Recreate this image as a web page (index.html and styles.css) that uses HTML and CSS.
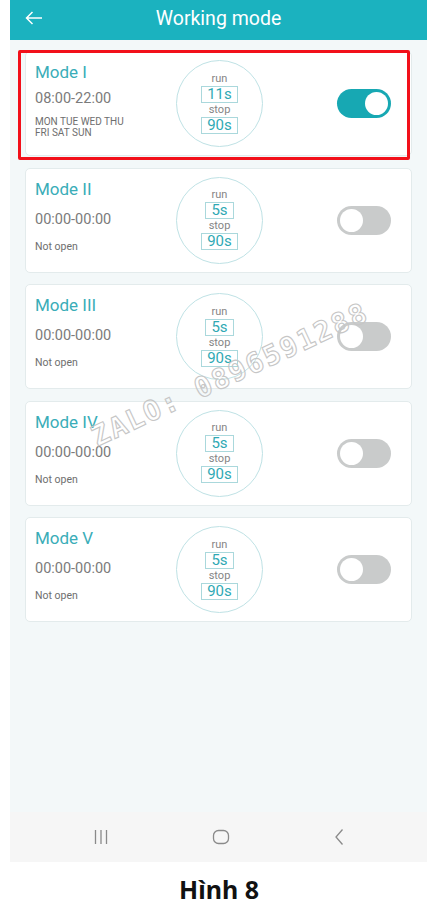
FILE: index.html
```html
<!DOCTYPE html>
<html>
<head>
<meta charset="utf-8">
<link rel="stylesheet" href="styles.css">
</head>
<body>
<div class="phone">
  <header class="header">
    <svg class="back" width="18" height="14" viewBox="0 0 18 14"><path d="M17 7H1.5M7.5 1L1.5 7l6 6" fill="none" stroke="#fff" stroke-width="1.5"/></svg>
    <div class="title">Working mode</div>
  </header>
  <main class="content">
    <div class="card first">
      <div class="info">
        <div class="name">Mode I</div>
        <div class="time">08:00-22:00</div>
        <div class="days">MON TUE WED THU<br>FRI SAT SUN</div>
      </div>
      <div class="circle"><span class="lbl">run</span><span class="val">11s</span><span class="lbl">stop</span><span class="val">90s</span></div>
      <div class="toggle on"><span class="knob"></span></div>
    </div>
    <div class="card">
      <div class="info">
        <div class="name">Mode II</div>
        <div class="time">00:00-00:00</div>
        <div class="status">Not open</div>
      </div>
      <div class="circle"><span class="lbl">run</span><span class="val">5s</span><span class="lbl">stop</span><span class="val">90s</span></div>
      <div class="toggle"><span class="knob"></span></div>
    </div>
    <div class="card">
      <div class="info">
        <div class="name">Mode III</div>
        <div class="time">00:00-00:00</div>
        <div class="status">Not open</div>
      </div>
      <div class="circle"><span class="lbl">run</span><span class="val">5s</span><span class="lbl">stop</span><span class="val">90s</span></div>
      <div class="toggle"><span class="knob"></span></div>
    </div>
    <div class="card">
      <div class="info">
        <div class="name">Mode IV</div>
        <div class="time">00:00-00:00</div>
        <div class="status">Not open</div>
      </div>
      <div class="circle"><span class="lbl">run</span><span class="val">5s</span><span class="lbl">stop</span><span class="val">90s</span></div>
      <div class="toggle"><span class="knob"></span></div>
    </div>
    <div class="card">
      <div class="info">
        <div class="name">Mode V</div>
        <div class="time">00:00-00:00</div>
        <div class="status">Not open</div>
      </div>
      <div class="circle"><span class="lbl">run</span><span class="val">5s</span><span class="lbl">stop</span><span class="val">90s</span></div>
      <div class="toggle"><span class="knob"></span></div>
    </div>
  </main>
  <nav class="navbar">
    <svg width="16" height="16" viewBox="0 0 16 16"><path d="M2.5 1v14M8 1v14M13.5 1v14" stroke="#8a8a8a" stroke-width="1.3"/></svg>
    <svg width="18" height="16" viewBox="0 0 18 16"><rect x="1.5" y="1.5" width="15" height="13" rx="5" fill="none" stroke="#8a8a8a" stroke-width="1.3"/></svg>
    <svg width="12" height="18" viewBox="0 0 12 18"><path d="M9.5 1.5L3 9l6.5 7.5" fill="none" stroke="#8a8a8a" stroke-width="1.3"/></svg>
  </nav>
  <div class="highlight"></div>
  <div class="watermark">ZALO: 0896591288</div>
</div>
<div class="caption">Hình 8</div>
</body>
</html>
```

FILE: styles.css
```css
* { box-sizing: border-box; }
body {
  margin: 0;
  background: #fff;
  font-family: Roboto, "Noto Sans", sans-serif;
}
.phone {
  position: relative;
  width: 417px;
  margin-left: 10px;
}
.header {
  height: 40px;
  background: #1bb2bf;
  display: flex;
  align-items: center;
  justify-content: center;
  position: relative;
}
.back {
  position: absolute;
  left: 15px;
  top: 11px;
}
.title {
  color: #fff;
  font-size: 19.5px;
  margin-top: -3px;
}
.content {
  background: #f3f8f9;
  height: 772px;
  padding: 11px 15px 0 15px;
  display: flex;
  flex-direction: column;
  gap: 11.5px;
}
.card {
  height: 105px;
  background: #fff;
  border: 1px solid #e3ebec;
  border-radius: 5px;
  display: flex;
  align-items: center;
}
.info {
  width: 150px;
  align-self: stretch;
  padding: 10px 0 0 9px;
  display: flex;
  flex-direction: column;
}
.name {
  color: #3aadb8;
  font-size: 17px;
  line-height: 20px;
}
.time {
  color: #7b7b7b;
  font-size: 14.5px;
  line-height: 18px;
  margin-top: 12px;
}
.first .time { margin-top: 8px; }
.status {
  color: #6e6e6e;
  font-size: 10.5px;
  line-height: 14px;
  margin-top: 11px;
}
.days {
  color: #6e6e6e;
  font-size: 10px;
  line-height: 11px;
  margin-top: 8px;
}
.circle {
  width: 87px;
  height: 87px;
  border-radius: 50%;
  border: 1px solid #bfe2e5;
  display: flex;
  flex-direction: column;
  align-items: center;
  justify-content: center;
}
.lbl {
  color: #858585;
  font-size: 11px;
  line-height: 12px;
}
.val {
  color: #2fa9b4;
  font-size: 15px;
  line-height: 15px;
  border: 1px solid #aad8dc;
  padding: 0 5px;
  margin: 1px 0;
}
.toggle {
  margin-left: auto;
  margin-right: 20px;
  width: 54px;
  height: 29px;
  border-radius: 15px;
  background: #c9cbcb;
  padding: 3px;
  display: flex;
}
.toggle.on {
  background: #17a8b3;
  justify-content: flex-end;
}
.knob {
  width: 23px;
  height: 23px;
  border-radius: 50%;
  background: #fff;
}
.navbar {
  height: 50px;
  background: #f6f6f6;
  display: flex;
  align-items: center;
  justify-content: space-between;
  padding: 0 82px 0 83px;
}
.highlight {
  position: absolute;
  left: 8px;
  top: 50px;
  width: 392px;
  height: 110px;
  border: 3px solid #f2101a;
  border-radius: 2px;
}
.watermark {
  position: absolute;
  left: 50px;
  top: 358px;
  width: 340px;
  text-align: center;
  font-family: "DejaVu Sans Mono", monospace;
  font-size: 28px;
  font-weight: 700;
  letter-spacing: 2px;
  color: transparent;
  -webkit-text-stroke: 1.1px #c6c6c6;
  transform: rotate(-25deg);
  pointer-events: none;
}
.caption {
  text-align: center;
  font-family: "Noto Sans", "Open Sans", sans-serif;
  font-weight: 700;
  font-size: 25px;
  line-height: 28px;
  margin-top: 13px;
  color: #111;
}
```
